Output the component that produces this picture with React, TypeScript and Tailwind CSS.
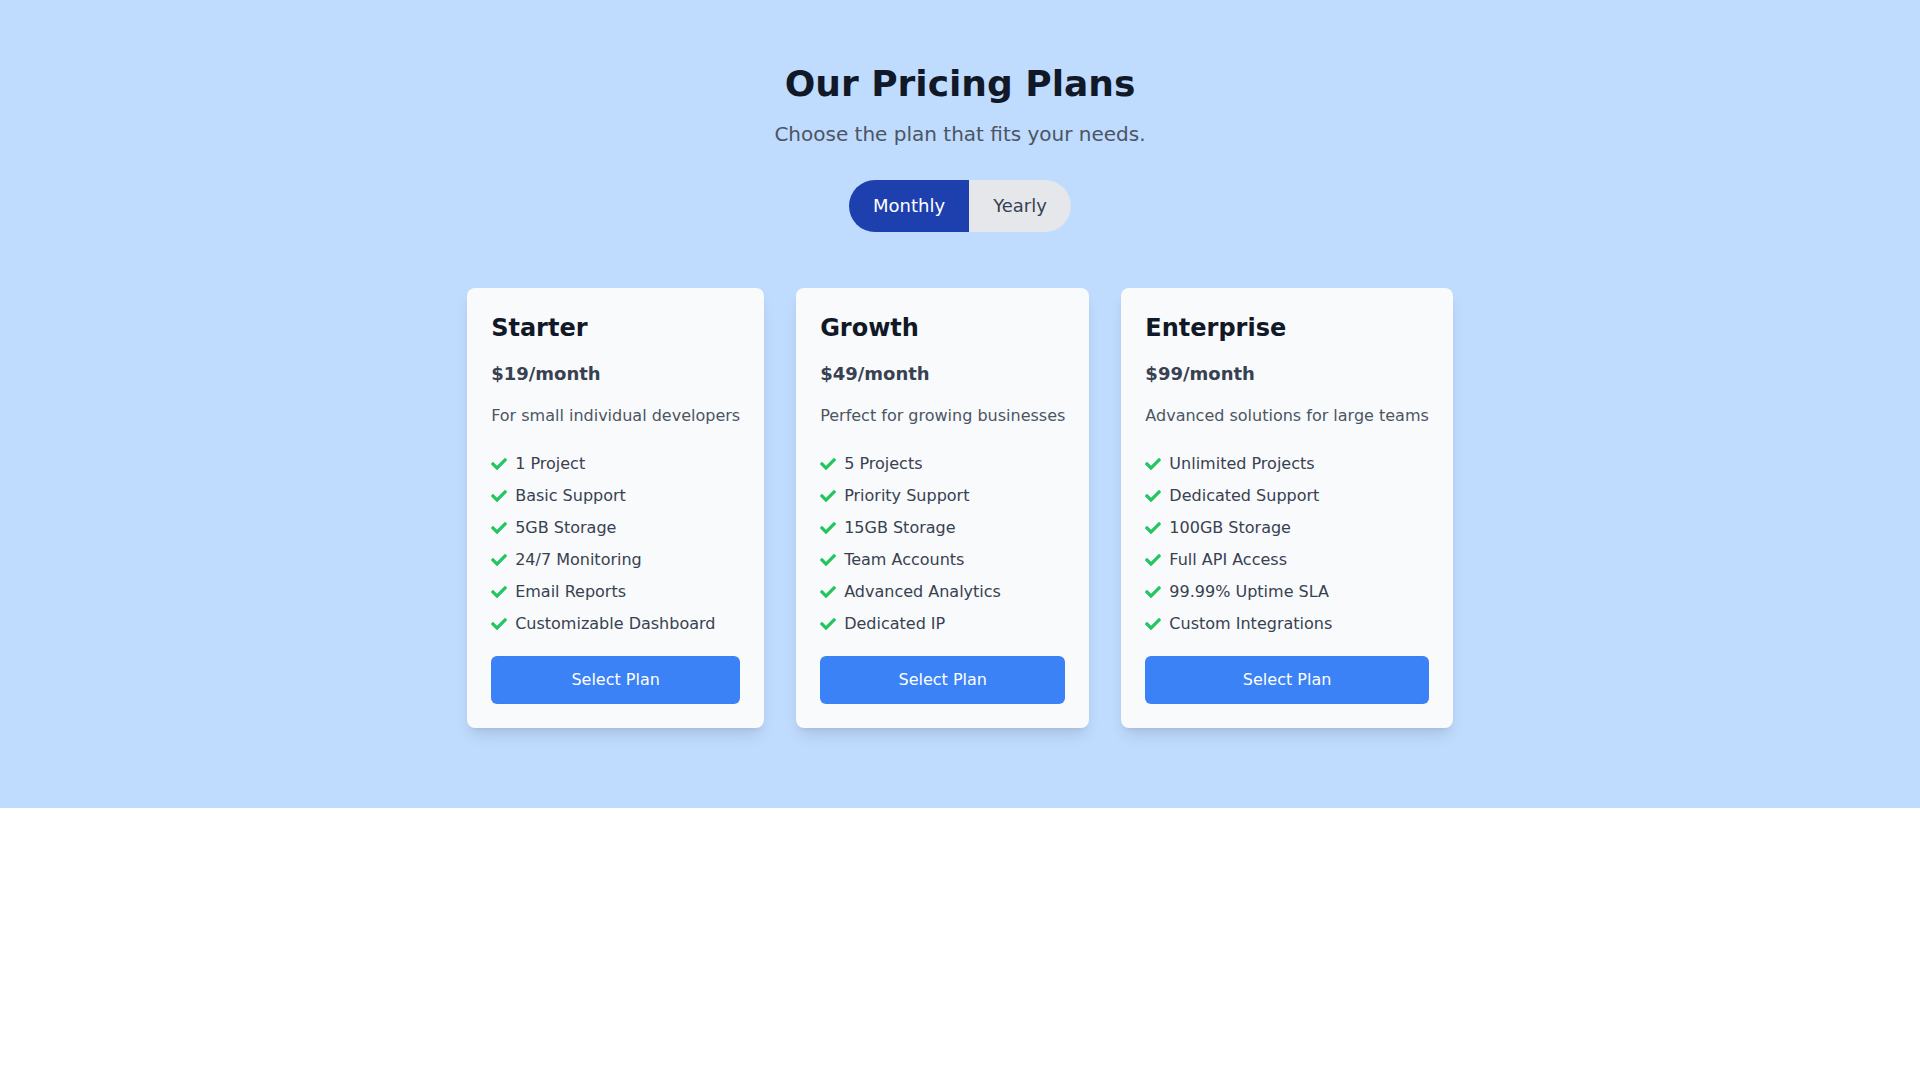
import React from 'react';
import { FaCheck } from 'react-icons/fa';

type Plan = {
  name: string;
  price: string;
  description: string;
  features: string[];
};

const PLANS: Plan[] = [
  {
    name: 'Starter',
    price: '$19/month',
    description: 'For small individual developers',
    features: ['1 Project', 'Basic Support', '5GB Storage', '24/7 Monitoring', 'Email Reports', 'Customizable Dashboard'],
  },
  {
    name: 'Growth',
    price: '$49/month',
    description: 'Perfect for growing businesses',
    features: ['5 Projects', 'Priority Support', '15GB Storage', 'Team Accounts', 'Advanced Analytics', 'Dedicated IP'],
  },
  {
    name: 'Enterprise',
    price: '$99/month',
    description: 'Advanced solutions for large teams',
    features: ['Unlimited Projects', 'Dedicated Support', '100GB Storage', 'Full API Access', '99.99% Uptime SLA', 'Custom Integrations'],
  },
];

function PlanCard({ plan }: { plan: Plan }) {
  return (
    <div className="bg-[#f9fafb] rounded-lg shadow-lg p-6 flex flex-col">
      <h2 className="text-2xl font-bold text-[#111827]">{plan.name}</h2>
      <p className="mt-4 text-lg font-bold text-[#374151]">{plan.price}</p>
      <p className="mt-4 text-base text-[#4b5563] whitespace-nowrap">{plan.description}</p>
      <ul className="mt-6 mb-5 space-y-2">
        {plan.features.map((f) => (
          <li key={f} className="flex items-center text-base text-[#374151]">
            <FaCheck className="w-4 h-4 text-[#22c55e] mr-2 shrink-0" />
            <span className="whitespace-nowrap">{f}</span>
          </li>
        ))}
      </ul>
      <button className="w-full py-3 rounded-md bg-[#3b82f6] text-white text-base">Select Plan</button>
    </div>
  );
}

export default function App() {
  const [billing, setBilling] = React.useState<'monthly' | 'yearly'>('monthly');

  return (
    <div className="min-h-screen bg-white font-['DejaVu_Sans',sans-serif]">
      <div className="bg-[#bfdbfe] pt-16 pb-20 flex flex-col items-center">
        <h1 className="text-4xl font-bold text-[#111827]">Our Pricing Plans</h1>
        <p className="mt-4 text-xl text-[#4b5563]">Choose the plan that fits your needs.</p>

        <div className="mt-8 flex rounded-full overflow-hidden">
          <button
            onClick={() => setBilling('monthly')}
            className={billing === 'monthly' ? 'px-6 py-3 text-lg bg-[#1e40af] text-white' : 'px-6 py-3 text-lg bg-[#e5e7eb] text-[#374151]'}
          >
            Monthly
          </button>
          <button
            onClick={() => setBilling('yearly')}
            className={billing === 'yearly' ? 'px-6 py-3 text-lg bg-[#1e40af] text-white' : 'px-6 py-3 text-lg bg-[#e5e7eb] text-[#374151]'}
          >
            Yearly
          </button>
        </div>

        <div className="mt-14 flex justify-center items-start gap-8">
          {PLANS.map((p) => (
            <PlanCard key={p.name} plan={p} />
          ))}
        </div>
      </div>
    </div>
  );
}
